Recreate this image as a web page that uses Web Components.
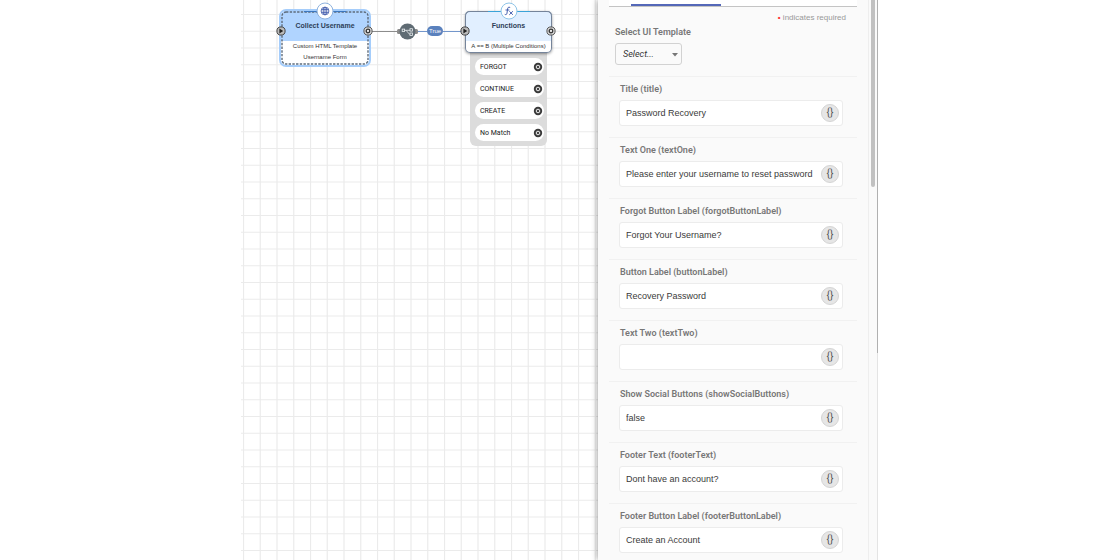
<!DOCTYPE html>
<html lang="en">
<head>
<meta charset="utf-8">
<title>Flow editor</title>
<style>
html, body { margin: 0; height: 100%; background: #fff; overflow: hidden; }
body { font-family: "Liberation Sans", Arial, sans-serif; color: #3c3c3c; }
</style>
</head>
<body>
<flow-editor>
  <flow-canvas>
    <flow-links></flow-links>
    <flow-node class="form" heading="Collect Username" icon="globe" selected>
      <span>Custom HTML Template</span><span>Username Form</span>
    </flow-node>
    <flow-outcomes>
      <flow-outcome>FORGOT</flow-outcome>
      <flow-outcome>CONTINUE</flow-outcome>
      <flow-outcome>CREATE</flow-outcome>
      <flow-outcome>No Match</flow-outcome>
    </flow-outcomes>
    <flow-node class="fn" heading="Functions" icon="fx">
      <span>A == B (Multiple Conditions)</span>
    </flow-node>
  </flow-canvas>
  <settings-panel>
    <template-select></template-select>
    <variable-field label="Title (title)" value="Password Recovery"></variable-field>
    <variable-field label="Text One (textOne)" value="Please enter your username to reset password"></variable-field>
    <variable-field label="Forgot Button Label (forgotButtonLabel)" value="Forgot Your Username?"></variable-field>
    <variable-field label="Button Label (buttonLabel)" value="Recovery Password"></variable-field>
    <variable-field label="Text Two (textTwo)" value=""></variable-field>
    <variable-field label="Show Social Buttons (showSocialButtons)" value="false"></variable-field>
    <variable-field label="Footer Text (footerText)" value="Dont have an account?"></variable-field>
    <variable-field label="Footer Button Label (footerButtonLabel)" value="Create an Account"></variable-field>
  </settings-panel>
</flow-editor>

<script>
class Base extends HTMLElement {
  connectedCallback() {
    if (!this.shadowRoot) this.attachShadow({ mode: 'open' }).innerHTML = this.view();
  }
}
const port = `<svg viewBox="0 0 10 10"><circle cx="5" cy="5" r="4.1" fill="#d8d8d8" stroke="#555" stroke-width="1"/><circle cx="5" cy="5" r="1.8" fill="#eee" stroke="#333" stroke-width="1.3"/></svg>`;
const portIn = `<svg viewBox="0 0 10 10"><circle cx="5" cy="5" r="4.1" fill="#bbb" stroke="#444" stroke-width="1"/><path d="M3.4 2.6 7.2 5 3.4 7.4z" fill="#222"/></svg>`;

customElements.define('flow-editor', class extends Base {
  view() { return `<style>
    :host { display: grid; grid-template-columns: minmax(0, 1fr) 280px; height: 100vh; padding: 0 242px 0 241px; box-sizing: border-box; }
    </style><slot></slot>`; }
});

customElements.define('flow-canvas', class extends Base {
  view() { return `<style>
    :host { display: block; position: relative; overflow: hidden; background: #fff; }
    .grid { position: absolute; inset: 0; width: 100%; height: 100%; }
    ::slotted(*) { position: absolute; }
    ::slotted(flow-links) { left: 126px; top: 21px; }
    ::slotted(.form) { left: 40px; top: 11px; }
    ::slotted(flow-outcomes) { left: 229px; top: 46px; }
    ::slotted(.fn) { left: 224px; top: 11px; }
    </style>
    <svg class="grid" aria-hidden="true"><defs><pattern id="g" width="67" height="67" patternUnits="userSpaceOnUse" x="2" y="14">
      <path d="M.5 0V67M17.25 0V67M34 0V67M50.75 0V67M0 .5H67M0 17.25H67M0 34H67M0 50.75H67" stroke="#ebebeb" stroke-width="1.2"/></pattern></defs>
      <rect width="100%" height="100%" fill="url(#g)"/></svg><slot></slot>`; }
});

customElements.define('flow-links', class extends Base {
  view() { return `<style>
    :host { display: flex; align-items: center; width: 98px; height: 20px; }
    i { height: 1px; background: #8c8c8c; }
    .a { width: 30px; } .b { width: 9px; background: #7396cb; } .c { flex: 1; background: #7396cb; }
    svg { width: 21px; height: 20px; flex: none; }
    span { width: 16px; height: 10px; border-radius: 5px; background: #5a81bd; color: #fff; font-size: 6px; line-height: 10px; text-align: center; }
    </style>
    <i class="a"></i>
    <svg viewBox="0 0 21 20"><rect x="0" y="8" width="21" height="5" rx="1.5" fill="#8a8a8a"/><circle cx="10.5" cy="10.5" r="8" fill="#5f6b73"/>
      <path d="M6 9.3h8M9 9.3l3.5 3.9h2" fill="none" stroke="#eceff1" stroke-width=".8"/><g fill="#5f6b73" stroke="#eceff1" stroke-width=".8"><rect x="5.2" y="8.1" width="2.4" height="2.4"/><rect x="13" y="7.7" width="2.4" height="2.4"/><rect x="13" y="12" width="2.4" height="2.4"/></g></svg>
    <i class="b"></i><span>True</span><i class="c"></i>`; }
});

customElements.define('flow-node', class extends Base {
  view() {
    const selected = this.hasAttribute('selected');
    const icon = this.getAttribute('icon') === 'globe'
      ? `<svg class="ic" viewBox="0 0 18 18"><circle cx="9" cy="9" r="8" fill="#fff" stroke="#8eb2de"/><g fill="none" stroke="#4a63b0" stroke-width=".9"><circle cx="9" cy="9" r="3.9"/><ellipse cx="9" cy="9" rx="1.8" ry="3.9"/><path d="M5.4 7.6h7.2M5.4 10.4h7.2M9 5.1v7.8"/></g></svg>`
      : `<svg class="ic" viewBox="0 0 18 18"><circle cx="9" cy="9" r="8" fill="#fff" stroke="#8fc5e8"/><g fill="none" stroke="#4660b0" stroke-width="1" stroke-linecap="round"><path d="M9.8 5.3c-1.5-.6-2 .3-2.2 1.6L7 11c-.2 1.5-.8 2-1.9 1.5M5.9 8h3"/><path d="m9.6 9.5 3 3M12.6 9.5l-3 3"/></g></svg>`;
    const outline = selected
      ? `<svg class="outline" viewBox="0 0 88 54"><rect x="1" y="1" width="86" height="52" rx="4" fill="none" stroke="#5e6c7c" stroke-width="1.4" stroke-dasharray="2.4 1.3"/></svg>` : '';
    return `<style>
    :host { display: block; width: 87px; height: 42px; box-sizing: border-box; border-radius: 5px; background: #fff; --head: #e1efff; --bar: #3aa3d8; --p: 12px; box-shadow: inset 0 0 0 1px #75849a, 0 1px 3px #0006; }
    :host([selected]) { width: 88px; height: 54px; box-shadow: 0 0 0 2px #a5cdfb; --head: #b0d4ff; --bar: #3d78c0; --p: 11px; }
    header { height: 30px; box-sizing: border-box; padding-top: 10px; background: var(--head); border-radius: 5px 5px 0 0; box-shadow: inset 0 1px #75849a, inset 1px 0 #75849a, inset -1px 0 #75849a; }
    :host([selected]) header { box-shadow: none; }
    h2 { margin: 0; font-size: 7px; line-height: 10px; font-weight: 700; text-align: center; color: #2d4057; }
    .t { display: grid; grid-auto-rows: var(--p); text-align: center; font-size: 6px; line-height: 10px; color: #333; white-space: nowrap; }
    svg { position: absolute; }
    .outline { left: 0; top: 0; width: 88px; height: 54px; }
    .bar { position: absolute; top: 0; left: 50%; width: 42px; height: 1px; margin-left: -21px; background: var(--bar); }
    .ic { width: 18px; height: 18px; left: 50%; margin-left: -9px; top: -9px; }
    .l, .r { position: absolute; width: 10px; height: 10px; top: 15px; }
    .l svg, .r svg { width: 10px; height: 10px; left: 0; top: 0; }
    .l { left: -5px; } .r { right: -4px; }
    </style>
    <header><h2>${this.getAttribute('heading')}</h2></header><div class="t"><slot></slot></div>
    ${outline}<div class="bar"></div>${icon}<div class="l">${portIn}</div><div class="r">${port}</div>`;
  }
});

customElements.define('flow-outcomes', class extends Base {
  view() { return `<style>
    :host { display: grid; row-gap: 5px; width: 77px; height: 100px; box-sizing: border-box; padding: 12px 3px 4px 5px; align-content: start; background: #dcdcdc; border-radius: 6px; }
    </style><slot></slot>`; }
});
customElements.define('flow-outcome', class extends Base {
  view() { return `<style>
    :host { display: flex; align-items: center; justify-content: space-between; height: 17px; box-sizing: border-box; padding: 0 1px 0 5px; border-radius: 9px; background: #fff; font: 7px/10px Roboto, sans-serif; color: #222; }
    svg { width: 10px; height: 10px; }
    </style><span><slot></slot></span><svg viewBox="0 0 10 10"><circle cx="5" cy="5" r="4.2" fill="#3a3a3a"/><circle cx="5" cy="5" r="1.8" fill="#444" stroke="#eee" stroke-width="1"/></svg>`; }
});

customElements.define('settings-panel', class extends Base {
  view() { return `<style>
    :host { display: grid; grid-template-columns: minmax(0, 1fr) 10px; position: relative; background: #fafafa; box-shadow: 0 0 6px #0007; clip-path: inset(0 0 0 -12px); height: 100vh; }
    main { padding: 0 11px; overflow: hidden; }
    .tabs { height: 7px; box-sizing: border-box; background: #fff; border-bottom: 1px solid #c4c4c4; display: flex; align-items: flex-end; padding-left: 22px; }
    .tabs i { width: 90px; height: 2px; background: #5468b8; }
    .req { margin: 5px 11px 0 0; font-size: 8px; line-height: 12px; color: #999; text-align: right; }
    .req b { color: #f33; font-weight: 700; }
    .bar { border-left: 1px solid #eee; display: flex; justify-content: space-between; box-sizing: border-box; padding-left: 2px; background: linear-gradient(#b0b0b0, #b0b0b0) right top / 1px 353px no-repeat, linear-gradient(#e4e4e4, #e4e4e4) right top / 1px 100% no-repeat; }
    .bar i { width: 4px; height: 187px; border-radius: 0 0 2px 2px; background: #c1c1c1; }
    </style>
    <main><div class="tabs"><i></i></div><p class="req"><b>•</b> indicates required</p><slot></slot></main>
    <div class="bar"><i></i></div>`; }
});

customElements.define('template-select', class extends Base {
  view() { return `<style>
    :host { display: block; box-sizing: border-box; padding: 2px 0 0 6px; height: 52px; }
    label { display: block; font: 600 9px/12px Roboto, sans-serif; color: #777; }
    .w { display: inline-block; position: relative; margin-top: 5px; height: 22px; }
    select { appearance: none; width: 67px; height: 22px; box-sizing: border-box; padding: 0 7px; border: 1px solid #d2d2d2; border-radius: 3px; background: #fafafa; font: italic 9px/20px Roboto, sans-serif; color: #333; display: block; }
    svg { position: absolute; right: 4px; top: 10px; width: 6px; height: 4px; pointer-events: none; }
    </style>
    <label for="s">Select UI Template</label>
    <span class="w"><select id="s"><option>Select...</option></select><svg viewBox="0 0 6 4"><path d="M0 0h6L3 3.4z" fill="#777"/></svg></span>`; }
});

customElements.define('variable-field', class extends Base {
  view() { return `<style>
    :host { display: block; height: 61px; box-sizing: border-box; border-top: 1px solid #f1f1f1; padding: 5px 14px 0 10px; }
    label { display: block; margin-left: 1px; font: 600 9px/14px Roboto, sans-serif; color: #777; white-space: nowrap; }
    .box { display: flex; align-items: center; height: 26px; box-sizing: border-box; margin-top: 4px; padding: 0 3px 0 6px; border: 1px solid #ececec; border-radius: 3px; background: #fff; }
    input { flex: 1; min-width: 0; height: 20px; padding: 0; border: 0; outline: 0; background: none; font: 9px/20px "Liberation Sans", sans-serif; color: #3a3a3a; }
    button { flex: none; display: grid; place-items: center; width: 18px; height: 18px; box-sizing: border-box; padding: 0; border: 1px solid #d4d4d4; border-radius: 50%; background: #e6e6e6; font: 10px/16px Roboto, sans-serif; color: #555; }
    </style>
    <label for="f">${this.getAttribute('label')}</label>
    <div class="box"><input id="f" type="text" value="${this.getAttribute('value')}"><button type="button" aria-label="Insert variable">{}</button></div>`; }
});
</script>
</body>
</html>
